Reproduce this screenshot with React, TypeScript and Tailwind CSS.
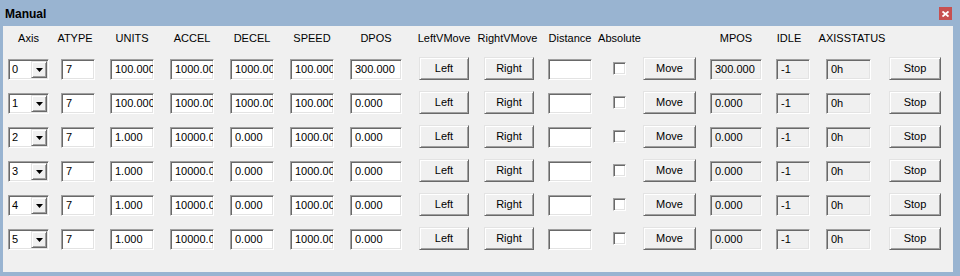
import React from "react";

const sunken =
  "border border-t-[#a0a0a0] border-l-[#a0a0a0] border-b-white border-r-white shadow-[inset_1px_1px_0_#696969,inset_-1px_-1px_0_#e3e3e3]";
const raised =
  "border border-t-[#e3e3e3] border-l-[#e3e3e3] border-b-[#696969] border-r-[#696969] shadow-[inset_1px_1px_0_#ffffff,inset_-1px_-1px_0_#a0a0a0]";

type Row = {
  axis: string;
  units: string;
  accel: string;
  decel: string;
  speed: string;
  dpos: string;
  mpos: string;
};

const rows: Row[] = [
  { axis: "0", units: "100.000", accel: "1000.000", decel: "1000.000", speed: "100.000", dpos: "300.000", mpos: "300.000" },
  { axis: "1", units: "100.000", accel: "1000.000", decel: "1000.000", speed: "100.000", dpos: "0.000", mpos: "0.000" },
  { axis: "2", units: "1.000", accel: "10000.000", decel: "0.000", speed: "1000.000", dpos: "0.000", mpos: "0.000" },
  { axis: "3", units: "1.000", accel: "10000.000", decel: "0.000", speed: "1000.000", dpos: "0.000", mpos: "0.000" },
  { axis: "4", units: "1.000", accel: "10000.000", decel: "0.000", speed: "1000.000", dpos: "0.000", mpos: "0.000" },
  { axis: "5", units: "1.000", accel: "10000.000", decel: "0.000", speed: "1000.000", dpos: "0.000", mpos: "0.000" },
];

function Field({ cls, value, gray }: { cls: string; value: string; gray?: boolean }) {
  return (
    <div
      className={`${cls} ${sunken} mt-[2px] h-[21px] shrink-0 overflow-hidden whitespace-nowrap pl-[4px] leading-[19px] ${
        gray ? "bg-[#f0f0f0]" : "bg-white"
      }`}
    >
      {value}
    </div>
  );
}

function Btn({ cls, label }: { cls: string; label: string }) {
  return (
    <div
      className={`${cls} ${raised} h-[23px] shrink-0 bg-[#f0f0f0] flex items-center justify-center leading-none`}
    >
      {label}
    </div>
  );
}

function Combo({ value }: { value: string }) {
  return (
    <div className={`ml-[5px] w-[41px] ${sunken} mt-[2px] h-[21px] shrink-0 bg-white flex items-stretch p-[1px]`}>
      <div className="flex-1 pl-[2px] leading-[17px]">{value}</div>
      <div className={`w-[16px] ${raised} bg-[#f0f0f0] flex items-center justify-center`}>
        <svg width="7" height="4" viewBox="0 0 7 4">
          <path d="M0 0H7L3.5 4Z" fill="#000" />
        </svg>
      </div>
    </div>
  );
}

function Check() {
  return <div className={`ml-[21px] w-[13px] h-[13px] mt-[5px] shrink-0 bg-white ${sunken}`} />;
}

function HeaderCell({ cls, label }: { cls: string; label: string }) {
  return (
    <div className={`${cls} shrink-0 flex justify-center whitespace-nowrap`}>
      <span>{label}</span>
    </div>
  );
}

export default function App() {
  return (
    <div
      className="w-[960px] h-[276px] bg-[#99b4d1] flex flex-col text-[11px] text-black"
      style={{ fontFamily: '"Liberation Sans", Arial, sans-serif' }}
    >
      <div className="h-[26px] shrink-0 flex items-center justify-between pl-[5px] pr-[8px]">
        <span className="font-bold text-[12px] mt-[2px]">Manual</span>
        <div className="w-[13px] h-[13px] bg-[#c75050] flex items-center justify-center mt-[1px]">
          <svg width="7" height="6" viewBox="0 0 7 6">
            <path d="M0.5 0.5L6.5 5.5M6.5 0.5L0.5 5.5" stroke="#fff" strokeWidth="1.8" />
          </svg>
        </div>
      </div>
      <div className="flex-1 ml-[3px] w-[950px] mb-[4px] bg-[#f0f0f0] pt-[6px]">
        <div className="flex h-[13px] leading-[13px] mb-[12px]">
          <HeaderCell cls="ml-[5px] w-[41px]" label="Axis" />
          <HeaderCell cls="ml-[12px] w-[34px] pr-[6px]" label="ATYPE" />
          <HeaderCell cls="ml-[15px] w-[44px]" label="UNITS" />
          <HeaderCell cls="ml-[16px] w-[44px]" label="ACCEL" />
          <HeaderCell cls="ml-[16px] w-[44px]" label="DECEL" />
          <HeaderCell cls="ml-[16px] w-[44px]" label="SPEED" />
          <HeaderCell cls="ml-[16px] w-[52px]" label="DPOS" />
          <HeaderCell cls="ml-[17px] w-[50px]" label="LeftVMove" />
          <HeaderCell cls="ml-[15px] w-[50px] pr-[3px]" label="RightVMove" />
          <HeaderCell cls="ml-[14px] w-[44px]" label="Distance" />
          <HeaderCell cls="ml-[21px] w-[13px]" label="Absolute" />
          <div className="ml-[17px] w-[53px] shrink-0" />
          <HeaderCell cls="ml-[14px] w-[52px]" label="MPOS" />
          <HeaderCell cls="ml-[14px] w-[34px] pr-[8px]" label="IDLE" />
          <HeaderCell cls="ml-[16px] w-[45px] pl-[7px]" label="AXISSTATUS" />
        </div>
        {rows.map((r, i) => (
          <div key={i} className="flex items-start h-[34px]">
            <Combo value={r.axis} />
            <Field cls="ml-[12px] w-[34px]" value="7" />
            <Field cls="ml-[15px] w-[44px]" value={r.units} />
            <Field cls="ml-[16px] w-[44px]" value={r.accel} />
            <Field cls="ml-[16px] w-[44px]" value={r.decel} />
            <Field cls="ml-[16px] w-[44px]" value={r.speed} />
            <Field cls="ml-[16px] w-[52px]" value={r.dpos} />
            <Btn cls="ml-[17px] w-[50px]" label="Left" />
            <Btn cls="ml-[15px] w-[50px]" label="Right" />
            <Field cls="ml-[14px] w-[44px]" value="" />
            <Check />
            <Btn cls="ml-[17px] w-[53px]" label="Move" />
            <Field cls="ml-[14px] w-[52px]" value={r.mpos} gray />
            <Field cls="ml-[14px] w-[34px]" value="-1" gray />
            <Field cls="ml-[16px] w-[45px]" value="0h" gray />
            <Btn cls="ml-[18px] w-[52px]" label="Stop" />
          </div>
        ))}
      </div>
    </div>
  );
}
